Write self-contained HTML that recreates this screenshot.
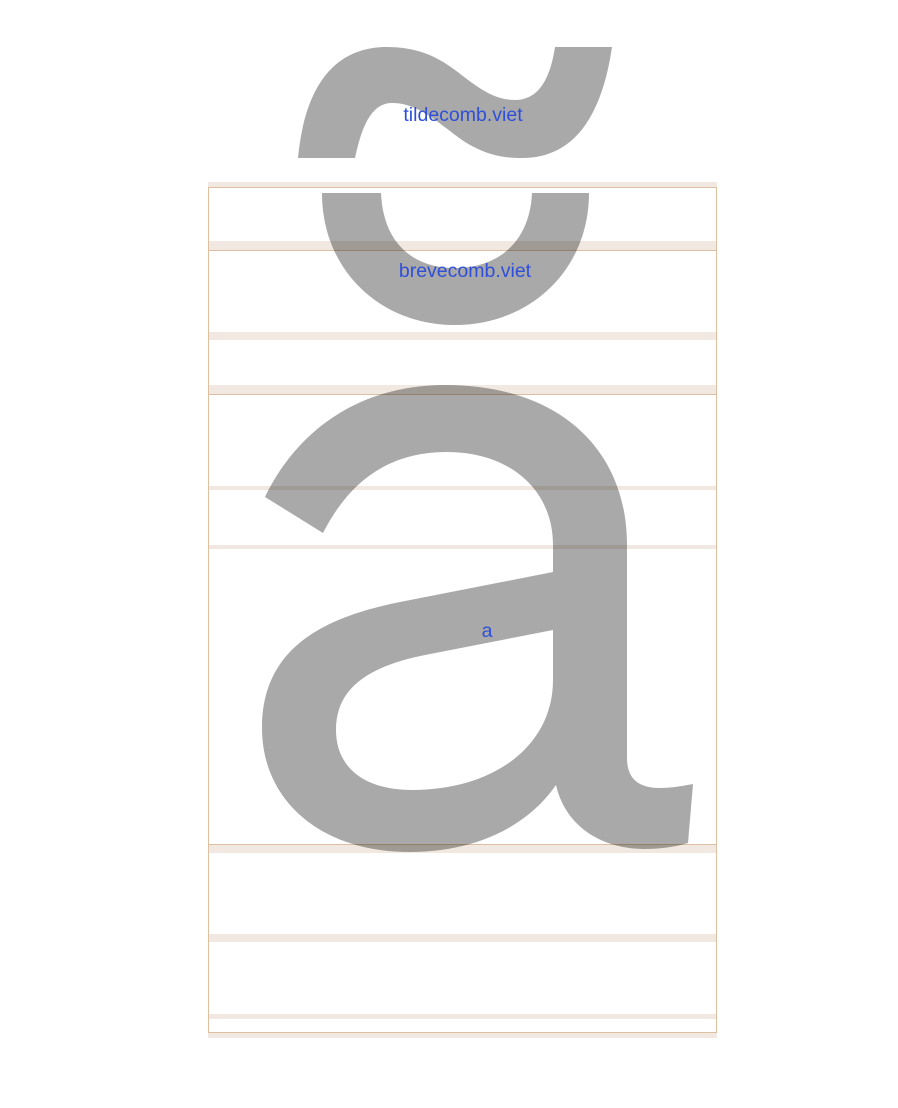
<!DOCTYPE html>
<html><head><meta charset="utf-8"><style>
html,body{margin:0;padding:0;background:#fff;width:898px;height:1108px;overflow:hidden}
.lbl{font-family:"Liberation Sans",sans-serif;font-size:19.5px;fill:#2f4fd8}
</style></head><body>
<svg width="898" height="1108" viewBox="0 0 898 1108" xmlns="http://www.w3.org/2000/svg">
<g fill="#f1e9e1">
<rect x="208" y="182" width="509" height="5"/>
<rect x="208" y="241" width="509" height="9"/>
<rect x="208" y="332" width="509" height="8"/>
<rect x="208" y="385" width="509" height="9"/>
<rect x="208" y="486" width="509" height="4"/>
<rect x="208" y="545" width="509" height="4"/>
<rect x="208" y="844" width="509" height="9"/>
<rect x="208" y="934" width="509" height="8"/>
<rect x="208" y="1014" width="509" height="5"/>
<rect x="208" y="1033" width="509" height="5"/>
</g>
<g stroke="#dcc0a0" stroke-width="1" fill="none">
<rect x="208.5" y="187.5" width="508" height="845"/>
<line x1="208" y1="250.5" x2="717" y2="250.5"/>
<line x1="208" y1="394.5" x2="717" y2="394.5"/>
<line x1="208" y1="844.5" x2="717" y2="844.5"/>
</g>
<g fill="#a9a9a9" style="mix-blend-mode:multiply" fill-rule="evenodd">
<path d="M298,158 L355,158 C362,125 372,103 392,103 C420,103 440,125 465,142 C485,154 500,158 522,158 C575,158 602,115 612,47 L555,47 C550,80 538,100 515,100 C492,100 475,85 455,70 C435,55 415,47 387,47 C335,47 305,85 298,158 Z"/>
<path d="M322,193 C322,270 380,325 455,325 C530,325 589,270 589,193 L532,193 C530,240 500,268 455,268 C410,268 383,240 381,193 Z"/>
<path d="M265,497 C300,425 365,385 445,385 C560,385 627,450 627,545 L627,758 C627,780 640,788 660,788 C672,788 682,786 693,784 L688,843 C675,847 660,849 645,849 C600,849 565,825 556,785 C525,830 470,852 410,852 C320,852 262,800 262,728 C262,650 320,618 400,602 L553,572 L553,545 C553,490 510,452 447,452 C390,452 350,480 323,533 Z M553,630 L425,655 C365,667 336,690 336,730 C336,768 365,790 412,790 C495,790 553,745 553,680 Z"/>
</g>
<text class="lbl" x="463" y="121" text-anchor="middle">tildecomb.viet</text>
<text class="lbl" x="465" y="277" text-anchor="middle">brevecomb.viet</text>
<text class="lbl" x="487" y="637" text-anchor="middle">a</text>
</svg>
</body></html>
